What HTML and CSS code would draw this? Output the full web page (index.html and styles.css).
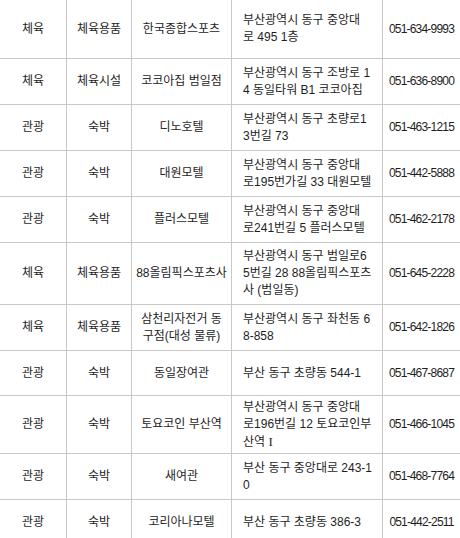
FILE: index.html
```html
<!DOCTYPE html>
<html lang="ko">
<head>
<meta charset="utf-8">
<link rel="stylesheet" href="styles.css">
</head>
<body>
<table class="list">
  <colgroup>
    <col class="c1"><col class="c2"><col class="c3"><col class="c4"><col class="c5">
  </colgroup>
  <tbody>
    <tr class="h59"><td>체육</td><td>체육용품</td><td class="name">한국종합스포츠</td><td class="addr">부산광역시 동구 중앙대<br>로 495 1층</td><td class="tel">051-634-9993</td></tr>
    <tr class="h46"><td>체육</td><td>체육시설</td><td class="name">코코아집 범일점</td><td class="addr">부산광역시 동구 조방로 1<br>4 동일타워 B1 코코아집</td><td class="tel">051-636-8900</td></tr>
    <tr class="h46"><td>관광</td><td>숙박</td><td class="name">디노호텔</td><td class="addr">부산광역시 동구 초량로1<br>3번길 73</td><td class="tel">051-463-1215</td></tr>
    <tr class="h46"><td>관광</td><td>숙박</td><td class="name">대원모텔</td><td class="addr">부산광역시 동구 중앙대<br>로195번가길 33 대원모텔</td><td class="tel">051-442-5888</td></tr>
    <tr class="h46"><td>관광</td><td>숙박</td><td class="name">플러스모텔</td><td class="addr">부산광역시 동구 중앙대<br>로241번길 5 플러스모텔</td><td class="tel">051-462-2178</td></tr>
    <tr class="h62"><td>체육</td><td>체육용품</td><td class="name">88올림픽스포츠사</td><td class="addr">부산광역시 동구 범일로6<br>5번길 28 88올림픽스포츠<br>사 (범일동)</td><td class="tel">051-645-2228</td></tr>
    <tr class="h46"><td>체육</td><td>체육용품</td><td class="name">삼천리자전거 동<br>구점(대성 물류)</td><td class="addr">부산광역시 동구 좌천동 6<br>8-858</td><td class="tel">051-642-1826</td></tr>
    <tr class="h45"><td>관광</td><td>숙박</td><td class="name">동일장여관</td><td class="addr">부산 동구 초량동 544-1</td><td class="tel">051-467-8687</td></tr>
    <tr class="h58"><td>관광</td><td>숙박</td><td class="name">토요코인 부산역</td><td class="addr">부산광역시 동구 중앙대<br>로196번길 12 토요코인부<br>산역 <span class="roman">I</span></td><td class="tel">051-466-1045</td></tr>
    <tr class="h46"><td>관광</td><td>숙박</td><td class="name">새여관</td><td class="addr">부산 동구 중앙대로 243-1<br>0</td><td class="tel">051-468-7764</td></tr>
    <tr class="h46"><td>관광</td><td>숙박</td><td class="name">코리아나모텔</td><td class="addr">부산 동구 초량동 386-3</td><td class="tel">051-442-2511</td></tr>
  </tbody>
</table>
</body>
</html>
```

FILE: styles.css
```css
html, body {
  margin: 0;
  padding: 0;
  background: #fff;
}

body {
  font-family: "Liberation Sans", "Noto Sans CJK KR", sans-serif;
  font-size: 12px;
  color: #1e1e1e;
  overflow: hidden;
}

.list {
  width: 460px;
  table-layout: fixed;
  border-collapse: separate;
  border-spacing: 0;
}

.c1 { width: 67px; }
.c2 { width: 65px; }
.c3 { width: 100px; }
.c4 { width: 151px; }
.c5 { width: 77px; }

.list td {
  box-sizing: border-box;
  border-right: 1px solid #c8c8c8;
  border-bottom: 1px solid #c8c8c8;
  padding: 0;
  text-align: center;
  vertical-align: middle;
  line-height: 17px;
  white-space: nowrap;
}

.list td.addr {
  text-align: left;
  padding-left: 11px;
}

.list td.tel {
  border-right: none;
  letter-spacing: -0.8px;
}

.roman {
  font-family: "Liberation Serif", serif;
  font-size: 13px;
}

.h59 td { height: 59px; }
.h46 td { height: 46px; }
.h45 td { height: 45px; }
.h58 td { height: 58px; }
.h62 td { height: 62px; }
```
